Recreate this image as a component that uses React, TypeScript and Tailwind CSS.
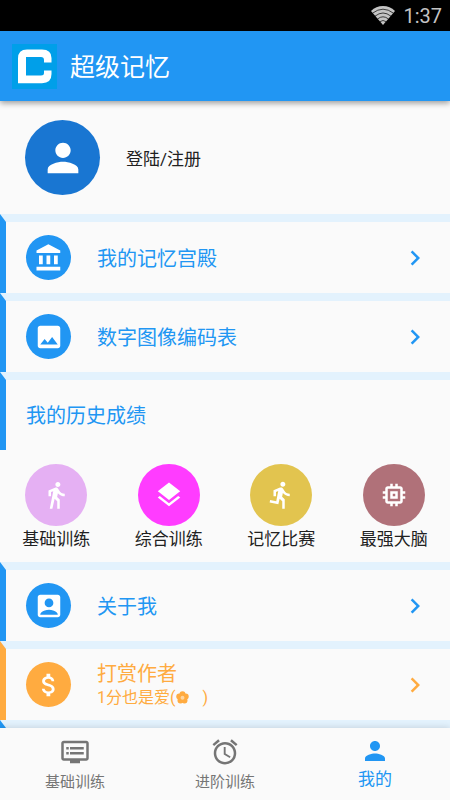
import React from 'react';
import type { IconType } from 'react-icons';
import {
  MdAccountBox,
  MdAlarm,
  MdAttachMoney,
  MdChevronRight,
  MdDirectionsRun,
  MdDirectionsWalk,
  MdDvr,
  MdImage,
  MdLayers,
  MdMemory,
  MdPerson,
} from 'react-icons/md';

interface Training {
  label: string;
  icon: IconType;
  circle: string;
}

const trainings: Training[] = [
  { label: '基础训练', icon: MdDirectionsWalk, circle: 'bg-[#e5b0f3]' },
  { label: '综合训练', icon: MdLayers, circle: 'bg-[#ff3cff]' },
  { label: '记忆比赛', icon: MdDirectionsRun, circle: 'bg-[#e2c44f]' },
  { label: '最强大脑', icon: MdMemory, circle: 'bg-[#b07179]' },
];

const tabs = [
  { label: '基础训练', icon: MdDvr, active: false },
  { label: '进阶训练', icon: MdAlarm, active: false },
  { label: '我的', icon: MdPerson, active: true },
];

function WifiIcon() {
  return (
    <svg viewBox="0 0 24 19" className="h-[19px] w-6" aria-hidden="true">
      <path d="M12 19 L0 5 Q5 0 12 0 Q19 0 24 5 Z" fill="#c4c4c4" />
      <g fill="none" stroke="#000" strokeWidth="0.7">
        <path d="M1.5 7.2 Q12 -0.8 22.5 7.2" />
        <path d="M4 10.2 Q12 3.8 20 10.2" />
        <path d="M6.5 13 Q12 8.6 17.5 13" />
        <path d="M9 15.6 Q12 13.4 15 15.6" />
      </g>
    </svg>
  );
}

function Logo() {
  return (
    <svg viewBox="0 0 45 45" className="size-[45px]" aria-hidden="true">
      <rect width="45" height="45" fill="#009fe9" />
      <path
        d="M6 39.2V14.5Q6 5.5 15 5.5H30Q39.5 5.5 39.5 14V18.4H32V16Q32 13 29 13H14V31.5H29Q32 31.5 32 29V26.4H39.5V30Q39.5 39.2 30 39.2Z"
        fill="#fff"
      />
    </svg>
  );
}

function PalaceIcon({ size }: { size?: string | number }) {
  return (
    <svg viewBox="0 0 24 24" width={size} height={size} fill="currentColor" aria-hidden="true">
      <path d="M4 10v7h3v-7H4zm6 0v7h3v-7h-3zM2 22h19v-3H2v3zm14-12v7h3v-7h-3zm-4.500-9L2 6v2h19V6l-9.500-5z" />
    </svg>
  );
}

function FlowerIcon() {
  return (
    <svg viewBox="0 0 24 24" className="mx-px inline size-[13px] align-[-1px]" aria-hidden="true">
      <g fill="currentColor">
        <circle cx="12" cy="6" r="5.500" />
        <circle cx="18" cy="10.300" r="5.500" />
        <circle cx="15.700" cy="17.500" r="5.500" />
        <circle cx="8.300" cy="17.500" r="5.500" />
        <circle cx="6" cy="10.300" r="5.500" />
      </g>
      <circle cx="12" cy="12.500" r="3.600" fill="#ffd59f" />
    </svg>
  );
}

interface RowProps {
  title: string;
  subtitle?: React.ReactNode;
  icon: React.ComponentType<{ size?: string | number }>;
  orange?: boolean;
}

function MenuRow({ title, subtitle, icon: Icon, orange }: RowProps) {
  return (
    <button
      className={`flex min-h-[79px] w-full items-center border-t-8 border-l-6 border-t-[#e3f2fd] py-2 pr-5 pl-5 text-left ${
        orange ? 'border-l-[#ffab40] text-[#ffab40]' : 'border-l-[#2196f3] text-[#2196f3]'
      }`}
    >
      <span
        className={`flex size-[45px] shrink-0 items-center justify-center rounded-full text-white ${
          orange ? 'bg-[#ffab40]' : 'bg-[#2196f3]'
        }`}
      >
        <Icon size={30} />
      </span>
      <span className="ml-[26px] flex flex-1 flex-col pt-[3px]">
        <span className="text-[20px] leading-6">{title}</span>
        {subtitle && <span className="text-[16px] leading-6">{subtitle}</span>}
      </span>
      <MdChevronRight size={30} />
    </button>
  );
}

export default function App() {
  return (
    <div className="flex h-screen flex-col bg-[#fafafa] font-[Roboto,'Noto_Sans_CJK_SC',sans-serif] text-[#212121]">
      <div className="flex h-[31px] shrink-0 items-center justify-end gap-2 bg-black pr-2 text-[20px] text-[#c4c4c4]">
        <WifiIcon />
        <span>1:37</span>
      </div>
      <header className="z-10 flex h-[70px] shrink-0 items-center gap-[13px] bg-[#2196f3] px-3 text-white shadow-[0_2px_6px_rgba(0,0,0,0.4)]">
        <Logo />
        <h1 className="pt-[3px] text-[25px] leading-8">超级记忆</h1>
      </header>

      <main className="min-h-0 flex-1 overflow-y-auto [scrollbar-width:none]">
        <button className="flex w-full items-center gap-[26px] px-[25px] py-[19px] text-left">
          <span className="flex size-[75px] items-center justify-center rounded-full bg-[#1976d2] text-white">
            <MdPerson size={46} />
          </span>
          <span className="pt-[3px] text-[17px] leading-6">登陆/注册</span>
        </button>

        <MenuRow title="我的记忆宫殿" icon={PalaceIcon} />
        <MenuRow title="数字图像编码表" icon={MdImage} />

        <section>
          <h2 className="border-t-8 border-l-6 border-t-[#e3f2fd] border-l-[#2196f3] pt-6 pb-[22px] pl-5 text-[20px] leading-6 text-[#2196f3]">
            我的历史成绩
          </h2>
          <div className="grid grid-cols-4 pt-[14px] pb-[10px]">
            {trainings.map(({ label, icon: Icon, circle }) => (
              <button key={label} className="flex flex-col items-center">
                <span className={`flex size-[62px] items-center justify-center rounded-full text-white ${circle}`}>
                  <Icon size={30} />
                </span>
                <span className="text-[17px] leading-[26px]">{label}</span>
              </button>
            ))}
          </div>
        </section>

        <MenuRow title="关于我" icon={MdAccountBox} />
        <MenuRow
          title="打赏作者"
          icon={MdAttachMoney}
          orange
          subtitle={
            <>
              1分也是爱(
              <FlowerIcon />
              <span className="ml-3">)</span>
            </>
          }
        />
        <div className="border-t-8 border-l-6 border-t-[#e3f2fd] border-l-[#2196f3]" />
      </main>

      <nav className="z-10 flex h-[72px] shrink-0 bg-[#fafafa] shadow-[0_-1px_6px_rgba(0,0,0,0.12)]">
        {tabs.map(({ label, icon: Icon, active }) => (
          <button
            key={label}
            aria-current={active ? 'page' : undefined}
            className={`flex flex-1 flex-col items-center ${
              active ? 'gap-px pt-2 text-[17px] text-[#2196f3]' : 'gap-[3px] pt-[9px] text-[15px] text-[#757575]'
            }`}
          >
            <Icon size={30} />
            <span className="leading-6">{label}</span>
          </button>
        ))}
      </nav>
    </div>
  );
}
